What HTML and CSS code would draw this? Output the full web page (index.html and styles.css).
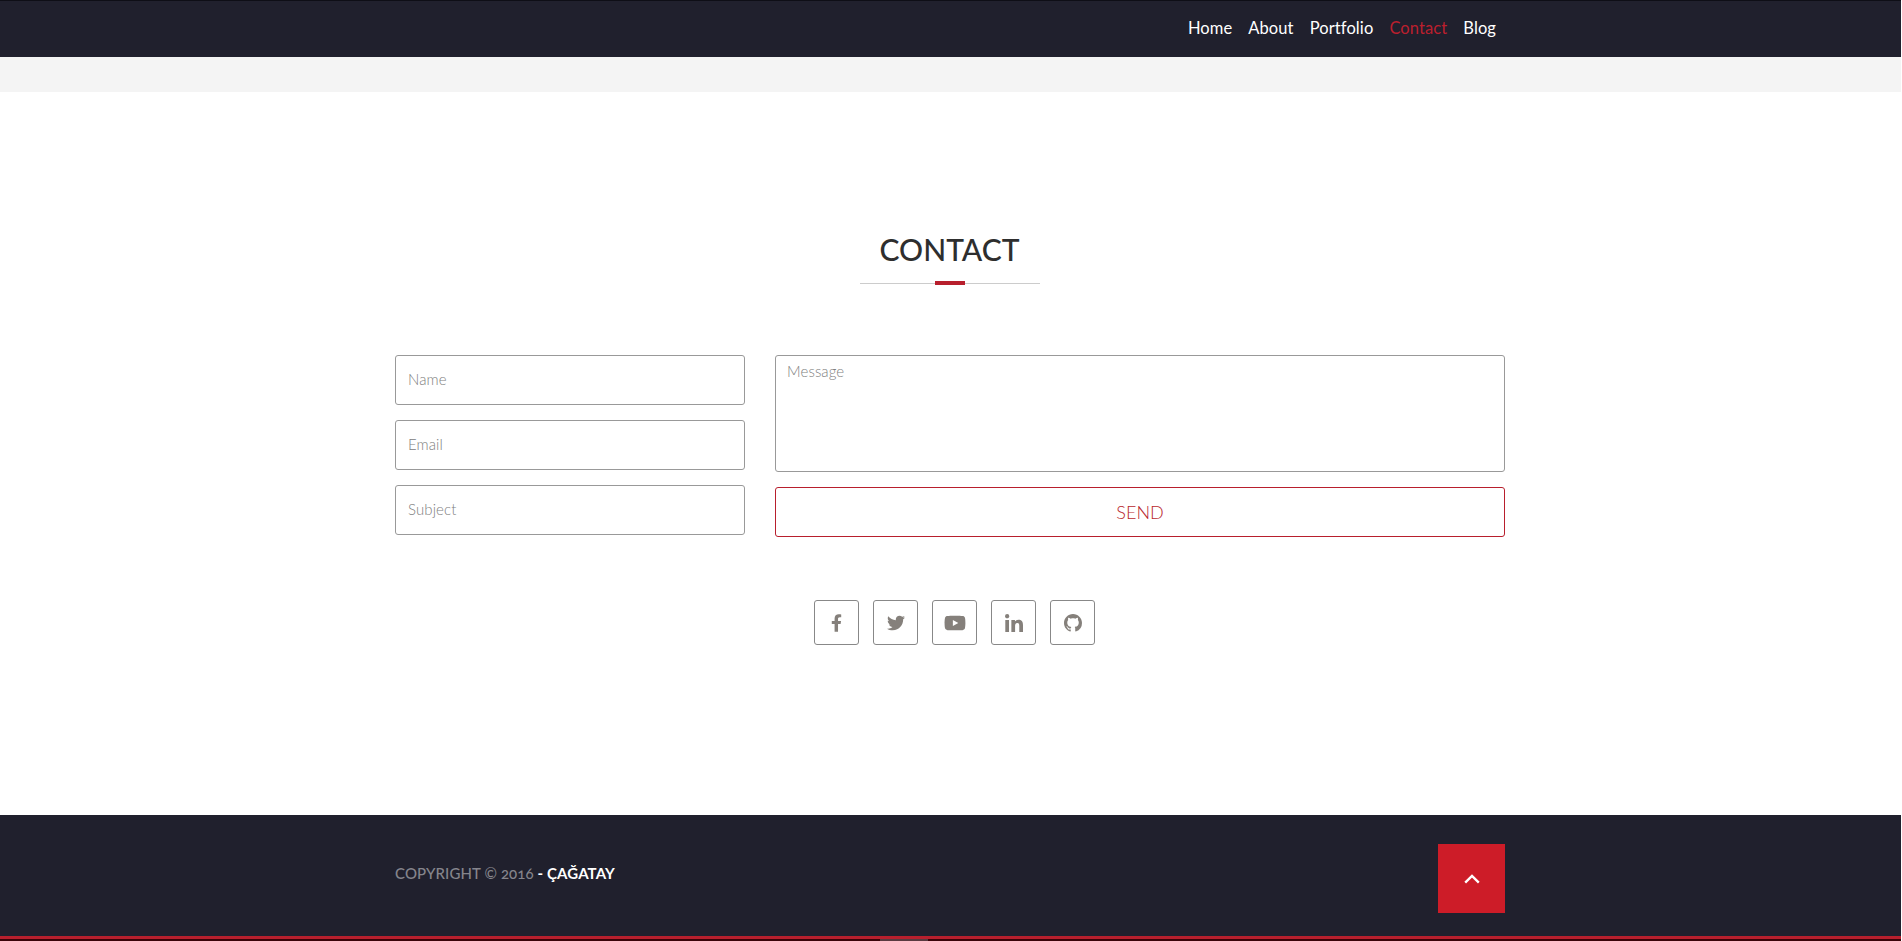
FILE: index.html
```html
<!DOCTYPE html>
<html lang="en">
<head>
<meta charset="utf-8">
<title>Contact</title>
<link rel="stylesheet" href="styles.css">
</head>
<body>
<div class="page">
  <header class="topbar">
    <nav class="container nav">
      <a href="#">Home</a>
      <a href="#">About</a>
      <a href="#">Portfolio</a>
      <a href="#" class="active">Contact</a>
      <a href="#">Blog</a>
    </nav>
  </header>
  <div class="band"></div>
  <main class="contact">
    <div class="title">
      <h2>CONTACT</h2>
      <div class="rule"><span></span></div>
    </div>
    <form class="container form">
      <div class="fields">
        <input type="text" placeholder="Name">
        <input type="text" placeholder="Email">
        <input type="text" placeholder="Subject">
      </div>
      <div class="compose">
        <textarea placeholder="Message"></textarea>
        <button type="button">SEND</button>
      </div>
    </form>
    <div class="social">
      <a href="#" aria-label="Facebook"><svg class="i-f" viewBox="0 0 320 512"><path d="M279.14 288l14.22-92.66h-88.91v-60.13c0-25.35 12.42-50.06 52.24-50.06h40.42V6.26S260.43 0 225.36 0c-73.22 0-121.08 44.38-121.08 124.72v70.62H22.89V288h81.39v224h100.17V288z"/></svg></a>
      <a href="#" aria-label="Twitter"><svg class="i-t" viewBox="0 0 512 512"><path d="M459.37 151.716c.325 4.548.325 9.097.325 13.645 0 138.72-105.583 298.558-298.558 298.558-59.452 0-114.68-17.219-161.137-47.106 8.447.974 16.568 1.299 25.34 1.299 49.055 0 94.213-16.568 130.274-44.832-46.132-.975-84.792-31.188-98.112-72.772 6.498.974 12.995 1.624 19.818 1.624 9.421 0 18.843-1.3 27.614-3.573-48.081-9.747-84.143-51.98-84.143-102.985v-1.299c13.969 7.797 30.214 12.67 47.431 13.319-28.264-18.843-46.781-51.005-46.781-87.391 0-19.492 5.197-37.36 14.294-52.954 51.655 63.675 129.3 105.258 216.365 109.807-1.624-7.797-2.599-15.918-2.599-24.04 0-57.828 46.782-104.934 104.934-104.934 30.213 0 57.502 12.67 76.67 33.137 23.715-4.548 46.456-13.32 66.599-25.34-7.798 24.366-24.366 44.833-46.132 57.827 21.117-2.273 41.584-8.122 60.426-16.243-14.292 20.791-32.161 39.308-52.628 54.253z"/></svg></a>
      <a href="#" aria-label="YouTube"><svg class="i-y" viewBox="0 0 576 512"><path d="M549.655 124.083c-6.281-23.65-24.787-42.276-48.284-48.597C458.781 64 288 64 288 64S117.22 64 74.629 75.486c-23.497 6.322-42.003 24.947-48.284 48.597-11.412 42.867-11.412 132.305-11.412 132.305s0 89.438 11.412 132.305c6.281 23.65 24.787 41.5 48.284 47.821C117.22 448 288 448 288 448s170.78 0 213.371-11.486c23.497-6.321 42.003-24.171 48.284-47.821 11.412-42.867 11.412-132.305 11.412-132.305s0-89.438-11.412-132.305zm-317.51 213.508V175.185l142.739 81.205-142.739 81.201z"/></svg></a>
      <a href="#" aria-label="LinkedIn"><svg class="i-l" viewBox="0 0 448 448"><path d="M100.28 448H7.4V148.9h92.88zM53.79 108.1C24.09 108.1 0 83.5 0 53.8a53.79 53.79 0 0 1 107.58 0c0 29.7-24.1 54.3-53.79 54.3zM447.9 448h-92.68V302.4c0-34.7-.7-79.2-48.29-79.2-48.29 0-55.69 37.7-55.69 76.7V448h-92.78V148.9h89.08v40.8h1.3c12.4-23.5 42.69-48.3 87.88-48.3 94 0 111.28 61.9 111.28 142.3V448z"/></svg></a>
      <a href="#" aria-label="GitHub"><svg class="i-g" viewBox="0 0 16 16"><path d="M8 0C3.58 0 0 3.58 0 8c0 3.54 2.29 6.53 5.47 7.59.4.07.55-.17.55-.38 0-.19-.01-.82-.01-1.49-2.01.37-2.53-.49-2.69-.94-.09-.23-.48-.94-.82-1.13-.28-.15-.68-.52-.01-.53.63-.01 1.08.58 1.23.82.72 1.21 1.87.87 2.33.66.07-.52.28-.87.51-1.07-1.78-.2-3.64-.89-3.64-3.95 0-.87.31-1.59.82-2.15-.08-.2-.36-1.02.08-2.12 0 0 .67-.21 2.2.82.64-.18 1.32-.27 2-.27.68 0 1.36.09 2 .27 1.53-1.04 2.2-.82 2.2-.82.44 1.1.16 1.92.08 2.12.51.56.82 1.27.82 2.15 0 3.07-1.87 3.75-3.65 3.95.29.25.54.73.54 1.48 0 1.07-.01 1.93-.01 2.2 0 .21.15.46.55.38A8.013 8.013 0 0016 8c0-4.42-3.58-8-8-8z"/></svg></a>
    </div>
  </main>
  <footer class="footer">
    <div class="container foot-row">
      <p class="copy">COPYRIGHT © 2016 <strong>- ÇAĞATAY</strong></p>
      <a href="#" class="up" aria-label="Back to top"><svg viewBox="0 0 16 10"><path d="M1.2 8.6L8 2l6.8 6.6"/></svg></a>
    </div>
  </footer>
  <div class="tail"><span></span></div>
</div>
</body>
</html>
```
FILE: styles.css
```css
* { box-sizing: border-box; }
html, body { margin: 0; padding: 0; }
body {
  background: #fff;
  font-family: Lato, "Open Sans", "Liberation Sans", sans-serif;
  height: 941px;
  overflow: hidden;
}
.page { width: 1901px; }
.container { width: 1110px; margin-left: 395px; }

.topbar {
  height: 57px;
  background: #20202d;
  border-top: 1px solid #0e0e16;
}
.nav {
  display: flex;
  justify-content: flex-end;
  height: 56px;
  align-items: center;
  padding: 0 1px 2px 0;
}
.nav a {
  color: #fff;
  font-size: 16.5px;
  line-height: 24px;
  padding: 0 8px;
  text-decoration: none;
  letter-spacing: 0.1px;
}
.nav a.active { color: #bb1f2d; }

.band { height: 35px; background: #f4f4f4; }

.contact { height: 723px; padding-top: 139px; background: #fff; }
.title { display: flex; flex-direction: column; align-items: center; margin-right: 2px; }
.title h2 {
  margin: 0;
  font-size: 30px;
  line-height: 36px;
  font-weight: 500;
  color: #2e2e2e;
}
.rule {
  width: 180px;
  height: 4px;
  margin-top: 14px;
  display: flex;
  justify-content: center;
  background: linear-gradient(#ccc, #ccc) center / 100% 1px no-repeat;
}
.rule span { width: 30px; height: 4px; background: #b81f2d; }

.form { display: flex; gap: 30px; margin-top: 70px; }
.fields { width: 350px; display: flex; flex-direction: column; gap: 15px; }
.compose { width: 730px; display: flex; flex-direction: column; gap: 15px; }

input, textarea, button { font-family: inherit; }
input, textarea {
  display: block;
  width: 100%;
  border: 1px solid #999;
  border-radius: 3px;
  background: #fff;
  padding: 0 12px;
  font-size: 15px;
  font-weight: 300;
  outline: none;
}
input { height: 50px; padding-bottom: 2px; }
textarea { height: 117px; padding: 6px 11px 0; resize: none; }
input::placeholder, textarea::placeholder { color: #808080; opacity: 1; letter-spacing: 0.1px; }
button {
  height: 50px;
  width: 100%;
  border: 1px solid #b81f2d;
  border-radius: 3px;
  background: #fff;
  color: #b81f2d;
  font-size: 18px;
  font-weight: 300;
}

.social { display: flex; justify-content: center; gap: 14px; margin-top: 63px; margin-left: 8px; }
.social a {
  width: 45px;
  height: 45px;
  border: 1px solid #888;
  border-radius: 3px;
  display: flex;
  align-items: center;
  justify-content: center;
}
.social svg { display: block; fill: #85807b; }
.i-f { width: 11px; height: 18px; }
.i-t { width: 18px; height: 18px; }
.i-y { width: 22px; height: 20px; }
.i-l { width: 18px; height: 18px; }
.i-g { width: 18px; height: 18px; }

.footer {
  height: 124px;
  background: #20202d;
  border-bottom: 3px solid #b81f2d;
}
.foot-row {
  display: flex;
  justify-content: space-between;
  align-items: flex-start;
  padding-top: 29px;
}
.copy {
  margin: 17px 0 0;
  font-size: 15px;
  line-height: 24px;
  letter-spacing: 0.1px;
  color: #85858c;
  font-weight: 500;
  font-variant-numeric: oldstyle-nums;
}
.copy strong { color: #fff; font-weight: 700; }
.up {
  width: 67px;
  height: 69px;
  background: #cd1c28;
  display: flex;
  align-items: center;
  justify-content: center;
}
.up svg { width: 16px; height: 10px; fill: none; stroke: #fff; stroke-width: 2.4; }

.tail { height: 2px; background: #3a0309; padding-left: 880px; }
.tail span { display: block; width: 48px; height: 2px; background: #5a3a40; }
```
